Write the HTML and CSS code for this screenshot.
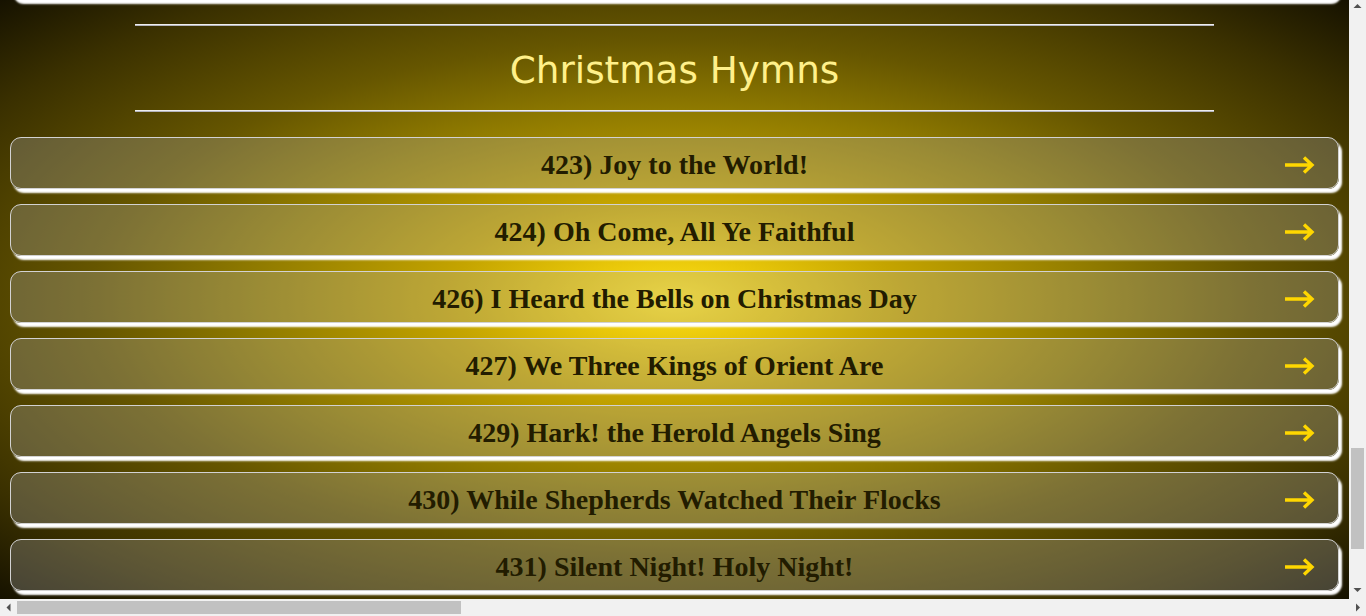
FILE: index.html
```html
<!DOCTYPE html>
<html lang="en">
<head>
<meta charset="utf-8">
<title>Hymns</title>
<link rel="stylesheet" href="styles.css">
</head>
<body>
<div class="window-row">
  <main class="viewport" id="viewport">
    <div class="viewport-inner">
      <section class="section section-earlier" aria-hidden="true">
        <div class="card-list">
          <div class="card card-last"></div>
        </div>
      </section>

      <section class="section">
        <hr class="rule rule-top">
        <h2 class="section-title">Christmas Hymns</h2>
        <hr class="rule rule-bottom">
        <div class="card-list">
          <a class="card" href="#423"><span class="title">423) Joy to the World!</span><svg class="arrow" viewBox="0 0 30 18" width="30" height="18"><path d="M0 9H27M19 1.5L27 9L19 16.5" fill="none" stroke="#ffd700" stroke-width="3.4"/></svg></a>
          <a class="card" href="#424"><span class="title">424) Oh Come, All Ye Faithful</span><svg class="arrow" viewBox="0 0 30 18" width="30" height="18"><path d="M0 9H27M19 1.5L27 9L19 16.5" fill="none" stroke="#ffd700" stroke-width="3.4"/></svg></a>
          <a class="card" href="#426"><span class="title">426) I Heard the Bells on Christmas Day</span><svg class="arrow" viewBox="0 0 30 18" width="30" height="18"><path d="M0 9H27M19 1.5L27 9L19 16.5" fill="none" stroke="#ffd700" stroke-width="3.4"/></svg></a>
          <a class="card" href="#427"><span class="title">427) We Three Kings of Orient Are</span><svg class="arrow" viewBox="0 0 30 18" width="30" height="18"><path d="M0 9H27M19 1.5L27 9L19 16.5" fill="none" stroke="#ffd700" stroke-width="3.4"/></svg></a>
          <a class="card" href="#429"><span class="title">429) Hark! the Herold Angels Sing</span><svg class="arrow" viewBox="0 0 30 18" width="30" height="18"><path d="M0 9H27M19 1.5L27 9L19 16.5" fill="none" stroke="#ffd700" stroke-width="3.4"/></svg></a>
          <a class="card" href="#430"><span class="title">430) While Shepherds Watched Their Flocks</span><svg class="arrow" viewBox="0 0 30 18" width="30" height="18"><path d="M0 9H27M19 1.5L27 9L19 16.5" fill="none" stroke="#ffd700" stroke-width="3.4"/></svg></a>
          <a class="card" href="#431"><span class="title">431) Silent Night! Holy Night!</span><svg class="arrow" viewBox="0 0 30 18" width="30" height="18"><path d="M0 9H27M19 1.5L27 9L19 16.5" fill="none" stroke="#ffd700" stroke-width="3.4"/></svg></a>
        </div>
      </section>
    </div>
  </main>

  <div class="vscroll" aria-hidden="true">
    <div class="sb-button"><svg width="17" height="17" viewBox="0 0 17 17"><polygon points="4.5,8 8.5,4 12.5,8" fill="#505050"/></svg></div>
    <div class="vtrack"><div class="vthumb"></div></div>
    <div class="sb-button"><svg width="17" height="17" viewBox="0 0 17 17"><polygon points="4.5,6 12.5,6 8.5,10" fill="#505050"/></svg></div>
  </div>
</div>

<div class="hscroll" aria-hidden="true">
  <div class="sb-button"><svg width="17" height="17" viewBox="0 0 17 17"><polygon points="10.5,4.5 10.5,12.5 6.5,8.5" fill="#505050"/></svg></div>
  <div class="htrack"><div class="hthumb"></div></div>
  <div class="sb-button"><svg width="17" height="17" viewBox="0 0 17 17"><polygon points="7,4.5 11,8.5 7,12.5" fill="#505050"/></svg></div>
</div>
<script src="script.js"></script>
</body>
</html>
```

FILE: styles.css
```css
html,
body {
  margin: 0;
  height: 100%;
  overflow: hidden;
}

body {
  display: grid;
  grid-template-rows: 1fr 17px;
  font-family: "Liberation Serif", "Times New Roman", serif;
  background: #f1f1f1;
}

.window-row {
  display: flex;
  min-height: 0;
}

.viewport {
  flex: 1;
  min-width: 0;
  overflow: hidden;
  background: radial-gradient(ellipse at center,
      #ffe21c 0%,
      #e9c80a 10%,
      #c4a400 23.6%,
      #8f7a00 44.7%,
      #665600 61%,
      #3a3000 84%,
      #161200 100%);
}

.viewport-inner {
  padding-bottom: 220px;
}

.card-list {
  display: flex;
  flex-direction: column;
  gap: 15px;
  padding: 0 10px;
}

.card {
  display: grid;
  grid-template-columns: 1fr auto 1fr;
  align-items: center;
  height: 50px;
  border: 1px solid #d2d2d2;
  border-radius: 11px;
  background: rgba(175, 175, 175, 0.3);
  box-shadow: 3px 4px 2px #ffffff;
  text-decoration: none;
}

.card-last {
  display: block;
}

.title {
  grid-column: 2;
  padding-top: 2px;
  margin-bottom: -2px;
  font-weight: bold;
  font-size: 28px;
  line-height: 50px;
  color: #221c00;
  white-space: nowrap;
}

.arrow {
  grid-column: 3;
  justify-self: end;
  margin: 4px 23px 0 0;
  display: block;
}

.rule {
  width: 80%;
  height: 0;
  margin: 0 auto;
  border: 0;
  border-top: 1px solid #eeeeee;
  border-bottom: 1px solid #b4b4bc;
}

.rule-top {
  margin-top: 24px;
}

.rule-bottom {
  margin-bottom: 25px;
}

.section-title {
  margin: 23px 0 18px;
  font-family: "DejaVu Sans", Verdana, sans-serif;
  font-weight: normal;
  font-size: 37.3px;
  line-height: 43px;
  color: #fff08a;
  text-align: center;
}

/* scrollbars */
.vscroll {
  width: 17px;
  display: flex;
  flex-direction: column;
  background: #f1f1f1;
}

.sb-button {
  width: 17px;
  height: 17px;
  flex: none;
}

.sb-button svg {
  display: block;
}

.vtrack {
  flex: 1;
  padding: 0 2px;
}

.vthumb {
  margin-top: 431px;
  height: 101px;
  background: #c1c1c1;
}

.hscroll {
  display: flex;
  background: #f1f1f1;
}

.htrack {
  flex: 1;
  padding: 2px 0;
}

.hthumb {
  width: 444px;
  height: 13px;
  background: #c1c1c1;
}
```

FILE: script.js
```js
document.getElementById('viewport').scrollTop = 52;
```
